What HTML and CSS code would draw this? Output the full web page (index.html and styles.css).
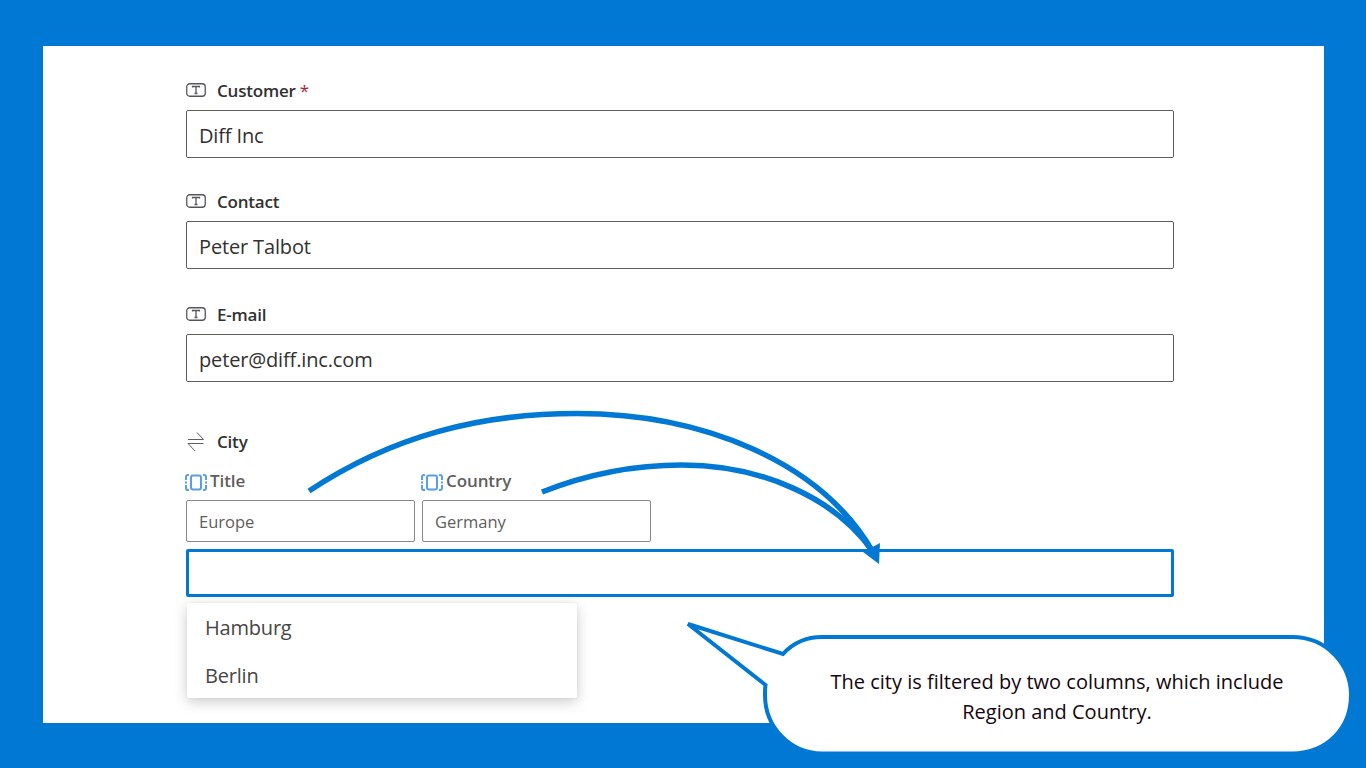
FILE: index.html
```html
<!DOCTYPE html>
<html lang="en">
<head>
<meta charset="utf-8">
<title>City filter</title>
<link rel="stylesheet" href="styles.css">
</head>
<body>
<main class="slide">
  <form class="panel">
    <div class="field field-customer">
      <label class="label"><svg class="icon-text" viewBox="0 0 20 14"><rect x="0.750" y="0.750" width="18.500" height="12.500" rx="3"/><path d="M6.500 4.500V3.500H13.500V4.500M10 3.500V10.500M8.500 10.500H11.500"/></svg><span class="label-name">Customer</span><span class="req">*</span></label>
      <input class="input" type="text" value="Diff Inc">
    </div>
    <div class="field field-contact">
      <label class="label"><svg class="icon-text" viewBox="0 0 20 14"><rect x="0.750" y="0.750" width="18.500" height="12.500" rx="3"/><path d="M6.500 4.500V3.500H13.500V4.500M10 3.500V10.500M8.500 10.500H11.500"/></svg><span class="label-name">Contact</span></label>
      <input class="input" type="text" value="Peter Talbot">
    </div>
    <div class="field field-email">
      <label class="label"><svg class="icon-text" viewBox="0 0 20 14"><rect x="0.750" y="0.750" width="18.500" height="12.500" rx="3"/><path d="M6.500 4.500V3.500H13.500V4.500M10 3.500V10.500M8.500 10.500H11.500"/></svg><span class="label-name">E-mail</span></label>
      <input class="input" type="text" value="peter@diff.inc.com">
    </div>
    <div class="field field-city">
      <label class="label"><svg class="icon-swap" viewBox="0 0 18 20"><path d="M1 7.500H16.500M10 0.500L16.500 7.500M16.500 11.500H1M1 11.500L8 19"/></svg><span class="label-name">City</span></label>
      <div class="filters">
        <div class="filter">
          <div class="filter-label"><svg class="icon-column" viewBox="0 0 22 17"><rect x="6" y="1.500" width="10" height="14" rx="2"/><path class="dash" d="M4 1H2.800A1.800 1.800 0 0 0 1 2.800V6M1 7.500V9.500M1 11V14.200A1.800 1.800 0 0 0 2.800 16H4M18 1H19.200A1.800 1.800 0 0 1 21 2.800V6M21 7.500V9.500M21 11V14.200A1.800 1.800 0 0 1 19.200 16H18"/></svg><span class="filter-name">Title</span></div>
          <input class="input input-small" type="text" value="Europe">
        </div>
        <div class="filter">
          <div class="filter-label"><svg class="icon-column" viewBox="0 0 22 17"><rect x="6" y="1.500" width="10" height="14" rx="2"/><path class="dash" d="M4 1H2.800A1.800 1.800 0 0 0 1 2.800V6M1 7.500V9.500M1 11V14.200A1.800 1.800 0 0 0 2.800 16H4M18 1H19.200A1.800 1.800 0 0 1 21 2.800V6M21 7.500V9.500M21 11V14.200A1.800 1.800 0 0 1 19.200 16H18"/></svg><span class="filter-name">Country</span></div>
          <input class="input input-small" type="text" value="Germany">
        </div>
      </div>
      <input class="input input-focus" type="text">
      <ul class="menu">
        <li class="menu-item">Hamburg</li>
        <li class="menu-item">Berlin</li>
      </ul>
    </div>
  </form>

  <svg class="overlay" viewBox="0 0 1366 768" aria-hidden="true">
    <path class="curve" d="M309 491C392 436 480 413.500 577 413.500C700 413.500 820 460 873 552"/>
    <path class="curve" d="M542 492C590 473 640 465 682 465C760 465 835 497 873 552"/>
    <path class="head" d="M880 543L879 564L863 552Z"/>
    <path class="bubble" d="M688 624L783 654C793 643 806 637 822 637H1292C1328 637 1351 666 1351 695C1351 727 1328 753.500 1292 753.500H822C790 753.500 765 727 765 695C765 691 765 688 765.500 685Z"/>
  </svg>
  <p class="note">The city is filtered by two columns, which include<br>Region and Country.</p>
</main>
</body>
</html>
```
FILE: styles.css
```css
* { box-sizing: border-box; }
html, body { margin: 0; height: 100%; }
body { font-family: "Open Sans", "Noto Sans", sans-serif; color: #323130; }
.slide {
  position: relative;
  width: 1366px;
  height: 768px;
  overflow: hidden;
  background: #0078d4;
  padding: 46px 42px 45px 43px;
}
.panel {
  height: 100%;
  background: #fff;
  padding: 34px 150px 0 143px;
}
.field { display: flex; flex-direction: column; }
.field-contact { margin-top: 33px; }
.field-email { margin-top: 35px; }
.field-city { margin-top: 49px; position: relative; }
.label {
  display: flex;
  align-items: center;
  height: 22px;
  margin-bottom: 8px;
  font-size: 17px;
  font-weight: 600;
  letter-spacing: -0.2px;
  color: #323130;
}
.label-name { margin-left: 11px; margin-bottom: 2px; }
.req { margin-left: 4px; margin-bottom: 2px; color: #a4262c; font-weight: 400; }
.icon-text { width: 20px; height: 14px; margin-top: -2px; fill: none; stroke: #56545a; stroke-width: 1.300; }
.icon-swap { width: 18px; height: 20px; margin-left: 1px; fill: none; stroke: #605e5c; stroke-width: 1; }
.field-city .label { margin-bottom: 17px; }
.field-city .label-name { margin-left: 12px; }
.input {
  display: block;
  width: 988px;
  height: 48px;
  padding: 2px 12px 0;
  border: 1px solid #605e5c;
  border-radius: 2px;
  background: #fff;
  color: #323130;
  font: 400 20px "Open Sans", "Noto Sans", sans-serif;
  letter-spacing: -0.15px;
  outline: none;
}
.filters { display: flex; gap: 7px; }
.filter { width: 229px; }
.filter-label {
  display: flex;
  align-items: center;
  height: 22px;
  margin-bottom: 8px;
  margin-left: -1px;
  gap: 3px;
  font-size: 17px;
  font-weight: 600;
  letter-spacing: -0.1px;
  color: #605e5c;
}
.filter-name { margin-bottom: 2px; }
.input-small {
  width: 229px;
  height: 42px;
  padding-top: 0;
  border-color: #8a8886;
  font-size: 16.500px;
  letter-spacing: 0;
  color: #605e5c;
}
.input-focus { margin-top: 7px; border: 3px solid #0078d4; }
.icon-column { width: 22px; height: 17px; margin-top: 3px; fill: none; stroke: #5b9fe3; stroke-width: 2; }
.menu {
  position: absolute;
  left: 1px;
  top: 172px;
  width: 390px;
  height: 95px;
  margin: 0;
  padding: 0;
  list-style: none;
  background: #fff;
  border-radius: 2px;
  box-shadow: 0 4px 14px rgba(0, 0, 0, 0.2), 0 0 3px rgba(0, 0, 0, 0.06);
}
.menu-item {
  height: 47.500px;
  padding: 1px 18px 0;
  font-size: 20px;
  line-height: 47.500px;
  letter-spacing: -0.2px;
  color: #484644;
}
.overlay { position: absolute; inset: 0; width: 1366px; height: 768px; pointer-events: none; }
.curve { fill: none; stroke: #0078d4; stroke-width: 5.500; }
.head { fill: #0078d4; }
.bubble { fill: #fff; stroke: #0078d4; stroke-width: 4; }
.note {
  position: absolute;
  left: 765px;
  top: 667px;
  width: 584px;
  margin: 0;
  text-align: center;
  font-size: 20px;
  line-height: 30px;
  color: #14060f;
}
```
